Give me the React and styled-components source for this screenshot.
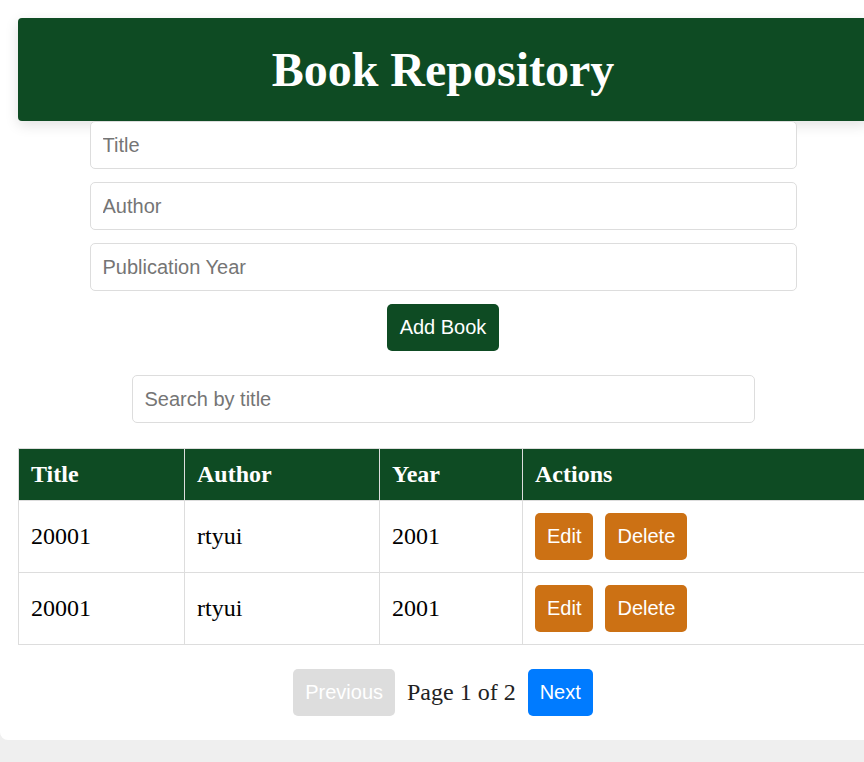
import React, { useState } from 'react'
import styled, { createGlobalStyle } from 'styled-components'

const GlobalStyle = createGlobalStyle`
    html, body {
        margin: 0;
        padding: 0;
        background: #efefef;
        overflow: hidden;
        font-family: "Liberation Serif", "Times New Roman", serif;
    }
`

const Page = styled.div`
    width: 886px;
    box-sizing: border-box;
    padding: 18px 18px 24px;
    background: #fff;
    border-radius: 0 0 8px 8px;
`

const Header = styled.h1`
    margin: 0;
    height: 103px;
    display: flex;
    align-items: center;
    justify-content: center;
    background: #0e4b23;
    color: #fff;
    font-size: 48px;
    font-weight: bold;
    border-radius: 4px;
    box-shadow: 0 4px 14px rgba(0, 0, 0, 0.12);
`

const Form = styled.div`
    width: 707px;
    margin: 0 auto;
    display: flex;
    flex-direction: column;
    align-items: center;
    gap: 13px;
`

const Input = styled.input`
    width: ${p => p.$width || '100%'};
    height: 48px;
    box-sizing: border-box;
    padding: 0 12px;
    border: 1px solid #ddd;
    border-radius: 5px;
    font-family: "Liberation Sans", Arial, sans-serif;
    font-size: 20px;
    outline: none;
    &::placeholder {
        color: #757575;
    }
`

const Button = styled.button`
    height: 47px;
    padding: 0 ${p => p.$pad || 12}px;
    border: none;
    border-radius: 5px;
    background: ${p => p.$bg};
    color: #fff;
    font-family: "Liberation Sans", Arial, sans-serif;
    font-size: 20px;
    cursor: pointer;
`

const SearchRow = styled.div`
    display: flex;
    justify-content: center;
    margin: 24px 0 25px;
`

const Table = styled.table`
    width: 850px;
    border-collapse: collapse;
    table-layout: fixed;
`

const Th = styled.th`
    width: ${p => p.$w}px;
    height: 52px;
    box-sizing: border-box;
    padding: 0 12px;
    background: #0e4b23;
    color: #fff;
    text-align: left;
    font-size: 24px;
    border: 1px solid #ddd;
`

const Td = styled.td`
    height: 72px;
    box-sizing: border-box;
    padding: 12px;
    font-size: 24px;
    color: #000;
    border: 1px solid #ddd;
`

const Actions = styled.div`
    display: flex;
    gap: 12px;
`

const Pager = styled.div`
    display: flex;
    justify-content: center;
    align-items: center;
    gap: 12px;
    margin-top: 24px;
    font-size: 24px;
    color: #222;
`

const books = [
    { title: '20001', author: 'rtyui', year: '2001' },
    { title: '20001', author: 'rtyui', year: '2001' },
]

const App = () => {
    const [search, setSearch] = useState('')

    return (
        <>
            <GlobalStyle />
            <Page>
                <Header>Book Repository</Header>
                <Form>
                    <Input placeholder="Title" />
                    <Input placeholder="Author" />
                    <Input placeholder="Publication Year" />
                    <Button $bg="#0e4b23" $pad={12.5}>Add Book</Button>
                </Form>
                <SearchRow>
                    <Input $width="623px" placeholder="Search by title" value={search} onChange={e => setSearch(e.target.value)} />
                </SearchRow>
                <Table>
                    <thead>
                        <tr>
                            <Th $w={166}>Title</Th>
                            <Th $w={195}>Author</Th>
                            <Th $w={143}>Year</Th>
                            <Th $w={346}>Actions</Th>
                        </tr>
                    </thead>
                    <tbody>
                        {books.map((b, i) => (
                            <tr key={i}>
                                <Td>{b.title}</Td>
                                <Td>{b.author}</Td>
                                <Td>{b.year}</Td>
                                <Td>
                                    <Actions>
                                        <Button $bg="#cc7114">Edit</Button>
                                        <Button $bg="#cc7114">Delete</Button>
                                    </Actions>
                                </Td>
                            </tr>
                        ))}
                    </tbody>
                </Table>
                <Pager>
                    <Button $bg="#dddddd" disabled>Previous</Button>
                    <span>Page 1 of 2</span>
                    <Button $bg="#007bff">Next</Button>
                </Pager>
            </Page>
        </>
    )
}

export default App
